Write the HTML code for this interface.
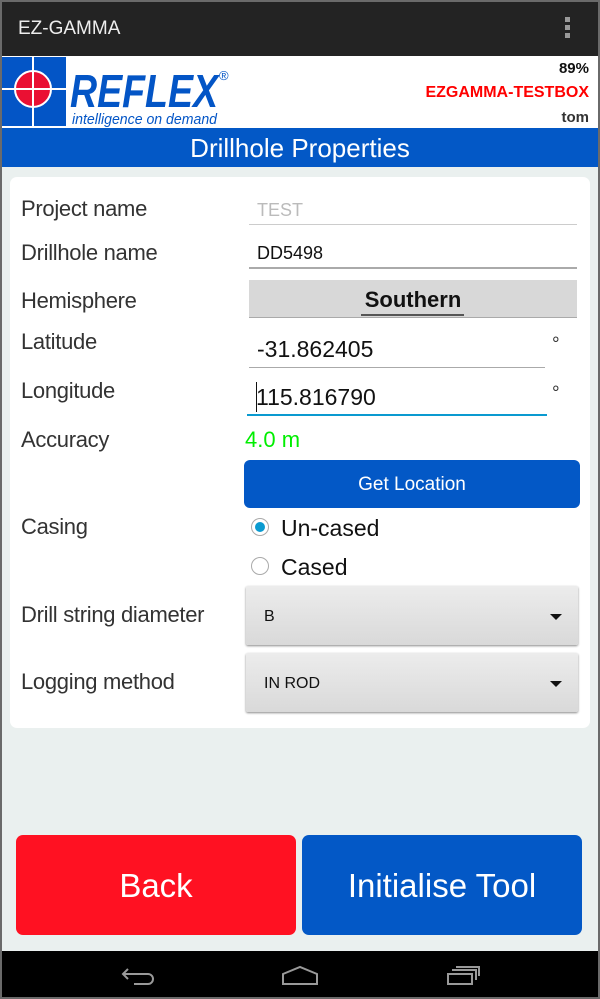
<!DOCTYPE html>
<html><head><meta charset="utf-8"><style>
*{margin:0;padding:0;box-sizing:border-box}
body{width:600px;height:999px;position:relative;overflow:hidden;background:#eaf0ef;font-family:"Liberation Sans",sans-serif;}
.a{position:absolute}
.lbl{position:absolute;left:21px;font-size:22px;color:#333;letter-spacing:-0.3px}
.line{position:absolute;height:2px;background:#bbb}
.sp{position:absolute;left:246px;width:332px;background:linear-gradient(#ececec,#d9d9d9);box-shadow:0 1px 2px #888;border-radius:2px;font-size:16px;color:#111}
.sp .t{position:absolute;left:18px;top:22px}
.sp .ar{position:absolute;right:16px;top:28px;width:0;height:0;border-left:6px solid transparent;border-right:6px solid transparent;border-top:6px solid #111}
</style></head><body>
<div class="a" style="left:0;top:0;width:600px;height:999px;border:2px solid #6a6a6a;z-index:9;pointer-events:none"></div>
<div class="a" style="left:0;top:0;width:600px;height:56px;background:#232323"></div>
<div class="a" style="left:18px;top:18px;color:#eee;font-size:19px">EZ-GAMMA</div>
<div class="a" style="left:565px;top:17px;width:5px;height:5px;background:#999;box-shadow:0 8px 0 #999,0 16px 0 #999"></div>
<div class="a" style="left:0;top:56px;width:600px;height:72px;background:#fff"></div>
<svg class="a" style="left:0;top:55px" width="240" height="75">
<rect x="2" y="2" width="64" height="69" fill="#0355c6"/>
<circle cx="33" cy="34" r="18" fill="#ea1033" stroke="#fff" stroke-width="2"/>
<rect x="32" y="2" width="2" height="69" fill="#fff"/>
<rect x="2" y="33" width="68" height="2" fill="#fff"/>
<text x="70" y="52" font-family="Liberation Sans" font-weight="bold" font-style="italic" font-size="46" fill="#0355c6" textLength="148" lengthAdjust="spacingAndGlyphs">REFLEX</text>
<text x="219" y="25" font-size="13" fill="#0355c6">®</text>
<text x="72" y="69" font-style="italic" font-size="15" fill="#0355c6" textLength="145" lengthAdjust="spacingAndGlyphs">intelligence on demand</text>
</svg>
<div class="a" style="right:11px;top:60px;font-size:15px;font-weight:bold;color:#111">89%</div>
<div class="a" style="right:11px;top:84px;font-size:16px;font-weight:bold;color:#f00">EZGAMMA-TESTBOX</div>
<div class="a" style="right:11px;top:109px;font-size:15px;font-weight:bold;color:#333">tom</div>
<div class="a" style="left:0;top:128px;width:600px;height:39px;background:#0358c6;color:#fff;font-size:26px;text-align:center;line-height:41px">Drillhole Properties</div>
<div class="a" style="left:10px;top:177px;width:580px;height:551px;background:#fff;border-radius:7px"></div>
<div class="lbl" style="top:196px">Project name</div>
<div class="a" style="left:257px;top:200px;font-size:18px;color:#bbb">TEST</div>
<div class="line" style="left:249px;top:224px;width:328px;height:1px;background:#ccc"></div>
<div class="lbl" style="top:240px">Drillhole name</div>
<div class="a" style="left:257px;top:243px;font-size:18px;color:#111">DD5498</div>
<div class="line" style="left:249px;top:267px;width:328px;height:2px;background:#aaa"></div>
<div class="a" style="left:249px;top:280px;width:328px;height:38px;background:#d8d8d8;border-bottom:1px solid #aaa"></div>
<div class="a" style="left:249px;top:287px;width:328px;text-align:center;font-size:22px;font-weight:bold;color:#111">Southern</div>
<div class="a" style="left:361px;top:314px;width:103px;height:2px;background:#555"></div>
<div class="lbl" style="top:288px">Hemisphere</div>
<div class="lbl" style="top:329px">Latitude</div>
<div class="a" style="left:257px;top:336px;font-size:23px;color:#111">-31.862405</div>
<div class="line" style="left:249px;top:367px;width:296px;height:1px;background:#aaa"></div>
<div class="a" style="left:552px;top:334px;font-size:19px;color:#333">°</div>
<div class="lbl" style="top:378px">Longitude</div>
<div class="a" style="left:256px;top:384px;font-size:23px;color:#111">115.816790</div>
<div class="a" style="left:256px;top:382px;width:1px;height:30px;background:#111"></div>
<div class="line" style="left:247px;top:414px;width:300px;background:#0a9ad0"></div>
<div class="a" style="left:552px;top:383px;font-size:19px;color:#333">°</div>
<div class="lbl" style="top:427px">Accuracy</div>
<div class="a" style="left:245px;top:427px;font-size:22px;color:#0e0">4.0 m</div>
<div class="a" style="left:244px;top:460px;width:336px;height:48px;background:#0358c6;border-radius:6px;color:#fff;font-size:19px;text-align:center;line-height:49px">Get Location</div>
<div class="lbl" style="top:514px">Casing</div>
<div class="a" style="left:251px;top:518px;width:18px;height:18px;border-radius:50%;border:1px solid #aaa;background:#fff"></div>
<div class="a" style="left:255px;top:522px;width:10px;height:10px;border-radius:50%;background:#0a9ad0"></div>
<div class="a" style="left:281px;top:515px;font-size:23px;color:#111">Un-cased</div>
<div class="a" style="left:251px;top:557px;width:18px;height:18px;border-radius:50%;border:1px solid #aaa;background:#fff"></div>
<div class="a" style="left:281px;top:554px;font-size:23px;color:#111">Cased</div>
<div class="lbl" style="top:602px">Drill string diameter</div>
<div class="sp" style="top:586px;height:59px"><span class="t">B</span><span class="ar"></span></div>
<div class="lbl" style="top:669px">Logging method</div>
<div class="sp" style="top:653px;height:59px"><span class="t">IN ROD</span><span class="ar"></span></div>
<div class="a" style="left:16px;top:835px;width:280px;height:100px;background:#ff1122;border-radius:7px;color:#fff;font-size:33px;text-align:center;line-height:102px">Back</div>
<div class="a" style="left:302px;top:835px;width:280px;height:100px;background:#0358c6;border-radius:7px;color:#fff;font-size:33px;text-align:center;line-height:102px">Initialise Tool</div>
<div class="a" style="left:0;top:951px;width:600px;height:48px;background:#000"></div>
<svg class="a" style="left:0;top:951px" width="600" height="48" fill="none" stroke="#999" stroke-width="2">
<path d="M128 18 L123 23 L128 28 M123 23 H148 A5 5 0 0 1 148 33 H134"/>
<path d="M283 33 V23 L300 16 L317 23 V33 Z"/>
<path d="M448 23 H472 V33 H448 Z M452 19 H476 V29 M456 16 H479 V25"/>
</svg>
</body></html>
